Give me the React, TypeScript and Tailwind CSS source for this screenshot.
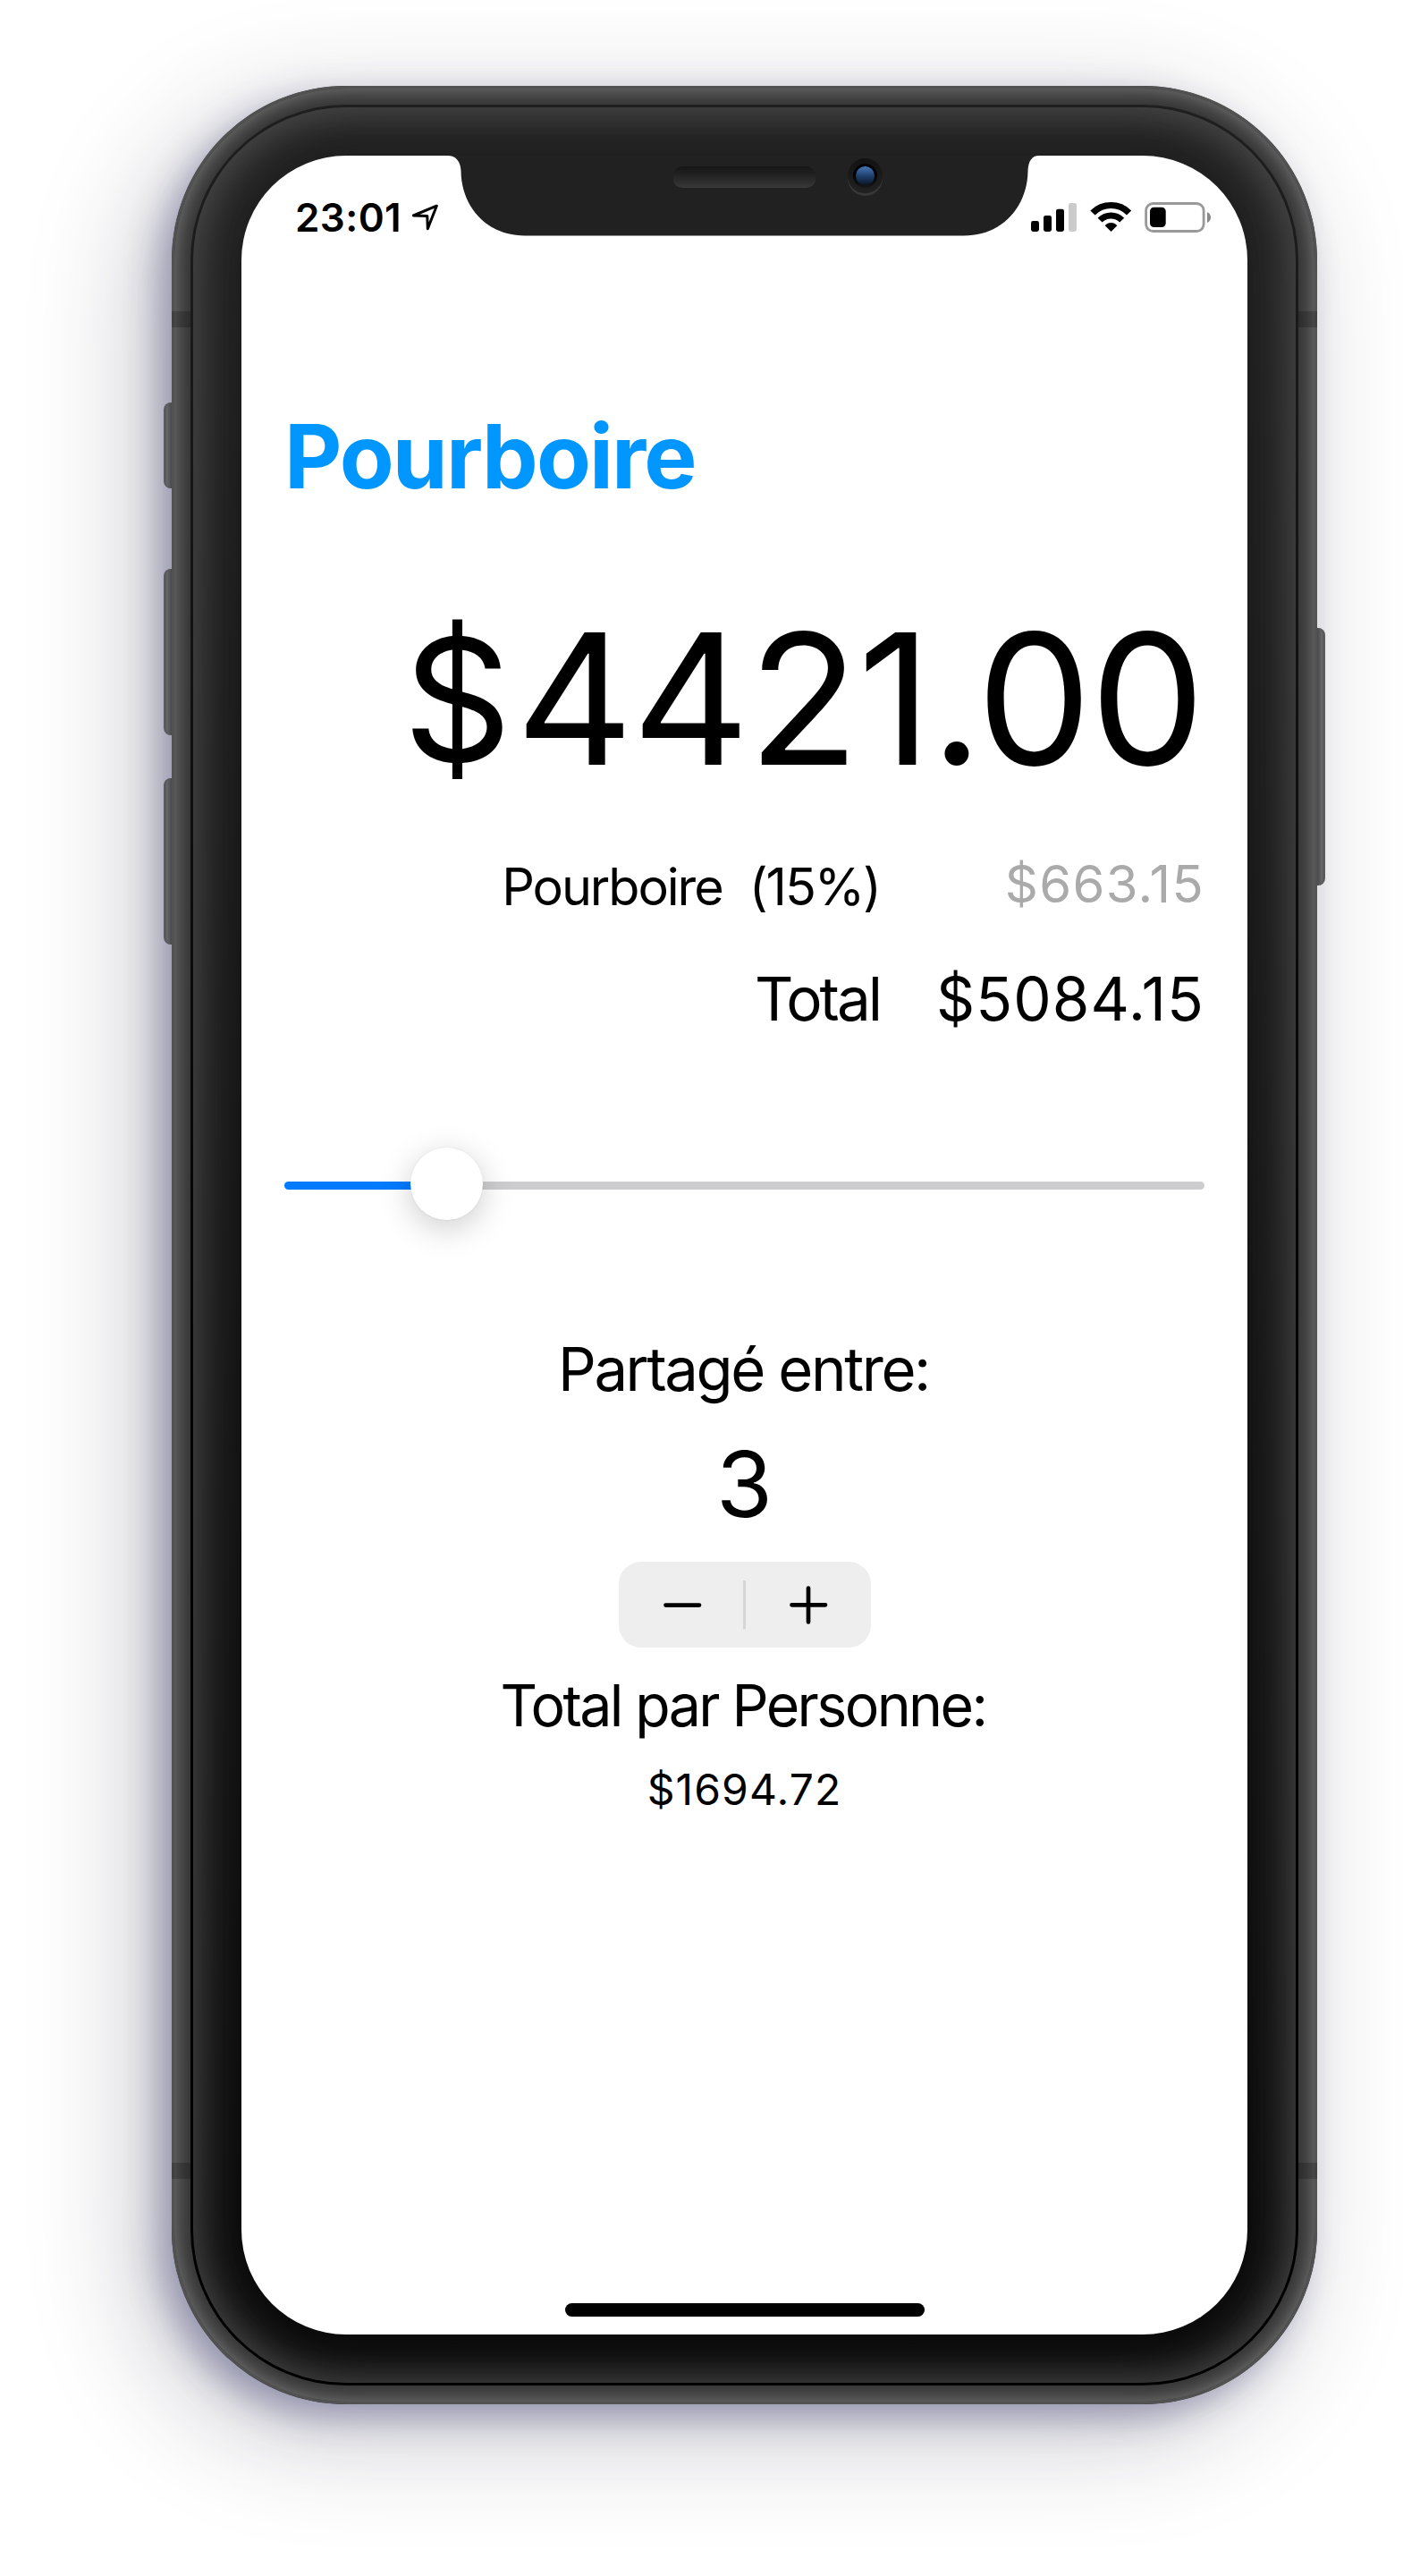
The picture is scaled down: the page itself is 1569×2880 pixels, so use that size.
function StatusIcons() {
  return (
    <svg className="block" width="202" height="34" viewBox="0 0 202 34">
      <rect x="0" y="21" width="9" height="12" rx="2.4" />
      <rect x="14" y="15" width="9" height="18" rx="2.4" />
      <rect x="28" y="7.7" width="9" height="25.3" rx="2.4" />
      <rect x="42" y="1" width="9" height="32" rx="2.4" fill="#cbcbcb" />
      <path d="M66.3 9.4Q76 0 89.4 0Q103 0 112.2 9.4L107 14.4Q99.5 7 89.4 7Q79.5 7 71.6 14.4Z" />
      <path d="M74.6 17.8Q81 11.6 89.4 11.6Q98 11.6 104.2 17.8L99.2 22.5Q95 18.4 89.4 18.4Q84 18.4 79.6 22.5Z" />
      <path d="M82.7 26.2Q85.5 23 89.5 23Q93.5 23 96.3 26.2L89.5 33Z" />
      <rect x="128.6" y="1.5" width="64.5" height="31" rx="8" fill="none" stroke="#999" strokeWidth="2.8" />
      <rect x="133" y="5.8" width="17.7" height="22.2" rx="4.5" />
      <path d="M197 11Q201 13 201 17Q201 21 197 23Z" fill="#888" />
    </svg>
  );
}

function Notch() {
  return (
    <div className="absolute left-[231px] top-0 h-[90px] w-[661px]">
      <svg className="absolute inset-0" width="661" height="90" viewBox="0 0 661 90">
        <path d="M0 -2V0C8 0 14 6 14.5 17C15 58 44 89.5 86 89.5H577C619 89.5 648 58 648.500 17C649 6 653 0 661 0V-2Z" fill="#212121" />
      </svg>
      <div className="absolute left-[252px] top-[12px] h-6 w-[159px] rounded-[10px] border-b border-[#3a3a3a] bg-linear-to-b from-[#151515] to-[#363636]" />
      <div className="absolute left-[447px] top-[3px] h-[39px] w-[39px] rounded-full bg-linear-to-b from-[#121212] to-[#222222] shadow-[0_3px_0_#383838]">
        <div className="absolute left-[6px] top-[6px] h-[27px] w-[27px] rounded-full bg-linear-to-b from-black to-[#181818]" />
        <div className="absolute left-[9px] top-[9px] h-[21px] w-[21px] rounded-full bg-linear-to-b from-[#4778b8] via-[#20406e] to-[#0b1526]" />
      </div>
    </div>
  );
}

const sideButtons = [
  "left-[-9px] top-[354px] h-24 rounded-l-[8px] bg-linear-to-r border-l-[3px]",
  "left-[-9px] top-[540px] h-[186px] rounded-l-[8px] bg-linear-to-r border-l-[3px]",
  "left-[-9px] top-[774px] h-[186px] rounded-l-[8px] bg-linear-to-r border-l-[3px]",
  "right-[-9px] top-[606px] h-[288px] rounded-r-[8px] bg-linear-to-l border-r-[3px]",
];

const bands = [
  "left-0 top-[252px]",
  "right-0 top-[252px]",
  "left-0 top-[2322px]",
  "right-0 top-[2322px]",
];

export default function App() {
  return (
    <div className="h-[2880px] w-[1569px] overflow-hidden bg-white pl-[192px] pt-24 font-['Inter',sans-serif] text-black">
      <div className="relative h-[2592px] w-[1281px] rounded-[195px] bg-[#343434] shadow-[-15px_15px_36px_rgba(40,40,100,0.35),-30px_30px_126px_rgba(35,35,60,0.28)]">
        {sideButtons.map((c) => (
          <div key={c} className={`absolute w-[9px] border-[#5a5a5c] from-[#6a6a6e] to-[#4a4a4d] ${c}`} />
        ))}
        <div className="absolute inset-0 rounded-[195px] border-[3px] border-[#525252] shadow-[inset_0_0_24px_#848484]" />
        {bands.map((c) => (
          <div key={c} className={`absolute h-[18px] w-[21px] bg-black/20 ${c}`} />
        ))}
        <div className="absolute inset-[21px] rounded-[174px] bg-linear-to-b from-[#1f1f1f] to-black p-[3px]">
          <div className="h-full w-full rounded-[171px] bg-linear-to-b from-[#212121] to-[#0b0b0b] p-[54px] shadow-[inset_0_0_50px_#505050,inset_18px_0_60px_rgba(255,255,255,0.05),inset_-18px_0_60px_rgba(255,255,255,0.05)]">
            <div className="relative flex h-full w-full flex-col overflow-hidden rounded-[117px] bg-white">
              <Notch />
              <header className="flex h-[90px] items-end justify-between pb-[4px] pl-[60px] pr-[40px]">
                <div className="flex items-end">
                  <span className="-mb-[3px] w-[118px] text-[44px] leading-[40px] font-semibold tracking-[0.4px] whitespace-nowrap">23:01</span>
                  <svg className="ml-[10px]" width="34" height="34" viewBox="0 0 34 34">
                    <path d="M4.3 15L30.3 4.2L20.3 29.8L19.8 15.6Z" fill="none" stroke="black" strokeWidth="3" strokeLinejoin="round" />
                  </svg>
                </div>
                <StatusIcons />
              </header>
              <main className="flex flex-col px-12">
                <h1 className="mt-[186px] text-[99.5px] font-bold leading-[120px] tracking-[-1.9px] text-[#0096ff]">Pourboire</h1>
                <div className="mt-[91px] h-[240px] pr-[1px] text-right text-[204px] leading-[240px] tracking-[-1.8px] whitespace-nowrap">
                  <span className="relative -top-1 mr-[6px] text-[190px] leading-none">$</span>4421.00
                </div>
                <div className="mt-[54px] grid h-[72px] grid-cols-[668px_1fr] whitespace-pre text-right">
                  <span className="pr-[2px] text-[57.5px] leading-[72px] tracking-[-2.1px] [word-spacing:1px]">Pourboire  (15%)</span>
                  <span className="-mt-[3px] text-[58px] leading-[72px] tracking-[1.3px] text-[#aaa]">$663.15</span>
                </div>
                <div className="mt-[50px] grid grid-cols-[668px_1fr] text-right">
                  <span className="pr-[2px] text-[67.3px] leading-[80px] tracking-[-3px]">Total</span>
                  <span className="text-[67.3px] leading-[80px] tracking-[1.1px]">$5084.15</span>
                </div>
                <div className="relative mt-[126px] flex h-[81px] items-center">
                  <div className="mt-1 h-[9px] w-full rounded-full bg-linear-to-r from-[#007aff] from-[180px] to-[#cdcdcf] to-[180px]" />
                  <div className="absolute left-[141px] h-[81px] w-[81px] rounded-full bg-white shadow-[0_9px_36px_rgba(0,0,0,0.2),0_0_2px_rgba(0,0,0,0.1)]" />
                </div>
                <section className="mt-[128px] flex flex-col items-center">
                  <p className="pr-[2px] text-[67px] leading-[78px] tracking-[-2.4px]">Partagé entre:</p>
                  <p className="mt-[29px] text-[102px] leading-[120px]">3</p>
                  <div className="mt-[27px] flex h-24 w-[282px] items-center justify-center rounded-[25px] bg-[#eee]">
                    <svg width="282" height="96" viewBox="0 0 282 96" fill="none">
                      <path d="M52.5 48.6H90M193.5 48.3H231M212 29.5V67.5" stroke="black" strokeWidth="4.7" strokeLinecap="round" />
                      <path d="M140.500 21V75.500" stroke="#d6d6d6" strokeWidth="3" />
                    </svg>
                  </div>
                  <p className="mt-[26px] pr-[3px] text-[64.4px] leading-[78px] tracking-[-2.6px]">Total par Personne:</p>
                  <p className="mt-[25px] text-[48px] leading-[60px] tracking-[1.1px]">$1694.72</p>
                </section>
              </main>
              <div className="mb-5 mt-auto h-[15px] w-[402px] self-center rounded-full bg-black" />
            </div>
          </div>
        </div>
      </div>
    </div>
  );
}
